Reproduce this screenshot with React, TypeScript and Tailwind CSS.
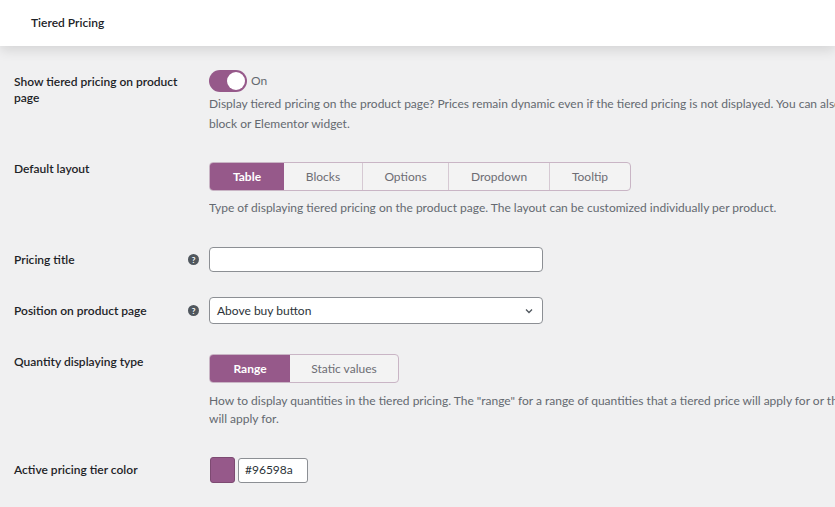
import React from 'react';

const HelpTip: React.FC = () => (
  <span className="flex h-[11px] w-[11px] items-center justify-center rounded-full bg-[#50575e] text-[8px] font-bold leading-none text-white">
    ?
  </span>
);

interface SegmentedProps {
  options: string[];
  widths: string[];
  active: number;
}

const Segmented: React.FC<SegmentedProps> = ({ options, widths, active }) => (
  <div className="flex h-[29px] w-fit overflow-hidden rounded-[4px] border border-[#c9b5c5] bg-[#f3f3f3]">
    {options.map((opt, i) => (
      <div
        key={opt}
        className={`flex items-center justify-center text-[12px] ${widths[i]} ${
          i === active ? 'bg-[#96598a] font-bold text-white' : 'text-[#6d6d74]'
        } ${i > 0 && i !== active + 1 ? 'border-l border-[#d6c9d3]' : ''}`}
      >
        {opt}
      </div>
    ))}
  </div>
);

const Row: React.FC<{
  label: string;
  help?: boolean;
  className?: string;
  labelClass?: string;
  children: React.ReactNode;
}> = ({ label, help, className = '', labelClass = '', children }) => (
  <div className={`flex ${className}`}>
    <div className={`flex w-[209px] shrink-0 items-center pl-[14px] pr-[10px] ${labelClass}`}>
      <div className="flex-1 text-[12px] font-semibold leading-[16px] text-[#1d2327]">{label}</div>
      {help && <HelpTip />}
    </div>
    <div className="min-w-0 flex-1 overflow-hidden">{children}</div>
  </div>
);

export default function App() {
  return (
    <div
      className="relative h-[507px] w-[835px] overflow-hidden bg-[#f0f0f1] text-[#3c434a]"
      style={{ fontFamily: 'Lato, "Noto Sans", sans-serif' }}
    >
      <div className="relative z-10 flex h-[46px] items-center bg-white pl-[31px] shadow-[0_4px_12px_rgba(0,0,0,0.12)]">
        <span className="text-[12px] font-semibold text-[#1d2327]">Tiered Pricing</span>
      </div>

      <div className="flex flex-col pt-[24px]">
        <Row label="Show tiered pricing on product page" className="items-start" labelClass="pt-[4px] pr-[26px]">
          <div className="flex items-center gap-[4px]">
            <div className="flex h-[22px] w-[38px] items-center justify-end rounded-full bg-[#96598a] pr-[2px]">
              <div className="h-[18px] w-[18px] rounded-full bg-white" />
            </div>
            <span className="text-[12px] text-[#646970]">On</span>
          </div>
          <p className="mt-[2px] whitespace-nowrap text-[12px] leading-[20px] text-[#646970]">
            Display tiered pricing on the product page? Prices remain dynamic even if the tiered pricing is not displayed. You can also
            <br />
            block or Elementor widget.
          </p>
        </Row>

        <Row label="Default layout" className="mt-[28px] items-start" labelClass="-mt-[1px]">
          <Segmented
            options={['Table', 'Blocks', 'Options', 'Dropdown', 'Tooltip']}
            widths={['w-[74px]', 'w-[78px]', 'w-[86px]', 'w-[101px]', 'w-[81px]']}
            active={0}
          />
          <p className="mt-[8px] whitespace-nowrap text-[12px] leading-[18px] text-[#646970]">
            Type of displaying tiered pricing on the product page. The layout can be customized individually per product.
          </p>
        </Row>

        <Row label="Pricing title" help className="mt-[30px] items-center">
          <div className="h-[25px] w-[334px] rounded-[4px] border border-[#8c8f94] bg-white" />
        </Row>

        <Row label="Position on product page" help className="mt-[25px] items-center">
          <div className="flex h-[27px] w-[334px] items-center justify-between rounded-[4px] border border-[#8c8f94] bg-white pl-[7px] pr-[8px]">
            <span className="text-[12px] text-[#2c3338]">Above buy button</span>
            <svg width="10" height="10" viewBox="0 0 10 10" fill="none">
              <path d="M2 3.5 L5 6.5 L8 3.5" stroke="#50575e" strokeWidth="1.3" />
            </svg>
          </div>
        </Row>

        <Row label="Quantity displaying type" className="mt-[30px] items-start">
          <Segmented options={['Range', 'Static values']} widths={['w-[80px]', 'w-[108px]']} active={0} />
          <p className="mt-[9px] whitespace-nowrap text-[12px] leading-[17.5px] text-[#646970]">
            How to display quantities in the tiered pricing. The "range" for a range of quantities that a tiered price will apply for or the
            <br />
            will apply for.
          </p>
        </Row>

        <Row label="Active pricing tier color" className="mt-[30px] items-center">
          <div className="flex items-center gap-[3px] pl-[1px]">
            <div className="h-[26px] w-[25px] rounded-[3px] border border-[#7d4a72] bg-[#96598a]" />
            <div className="flex h-[25px] w-[70px] items-center rounded-[3px] border border-[#8c8f94] bg-white pl-[6px] text-[12px] text-[#2c3338]">
              #96598a
            </div>
          </div>
        </Row>
      </div>
    </div>
  );
}
